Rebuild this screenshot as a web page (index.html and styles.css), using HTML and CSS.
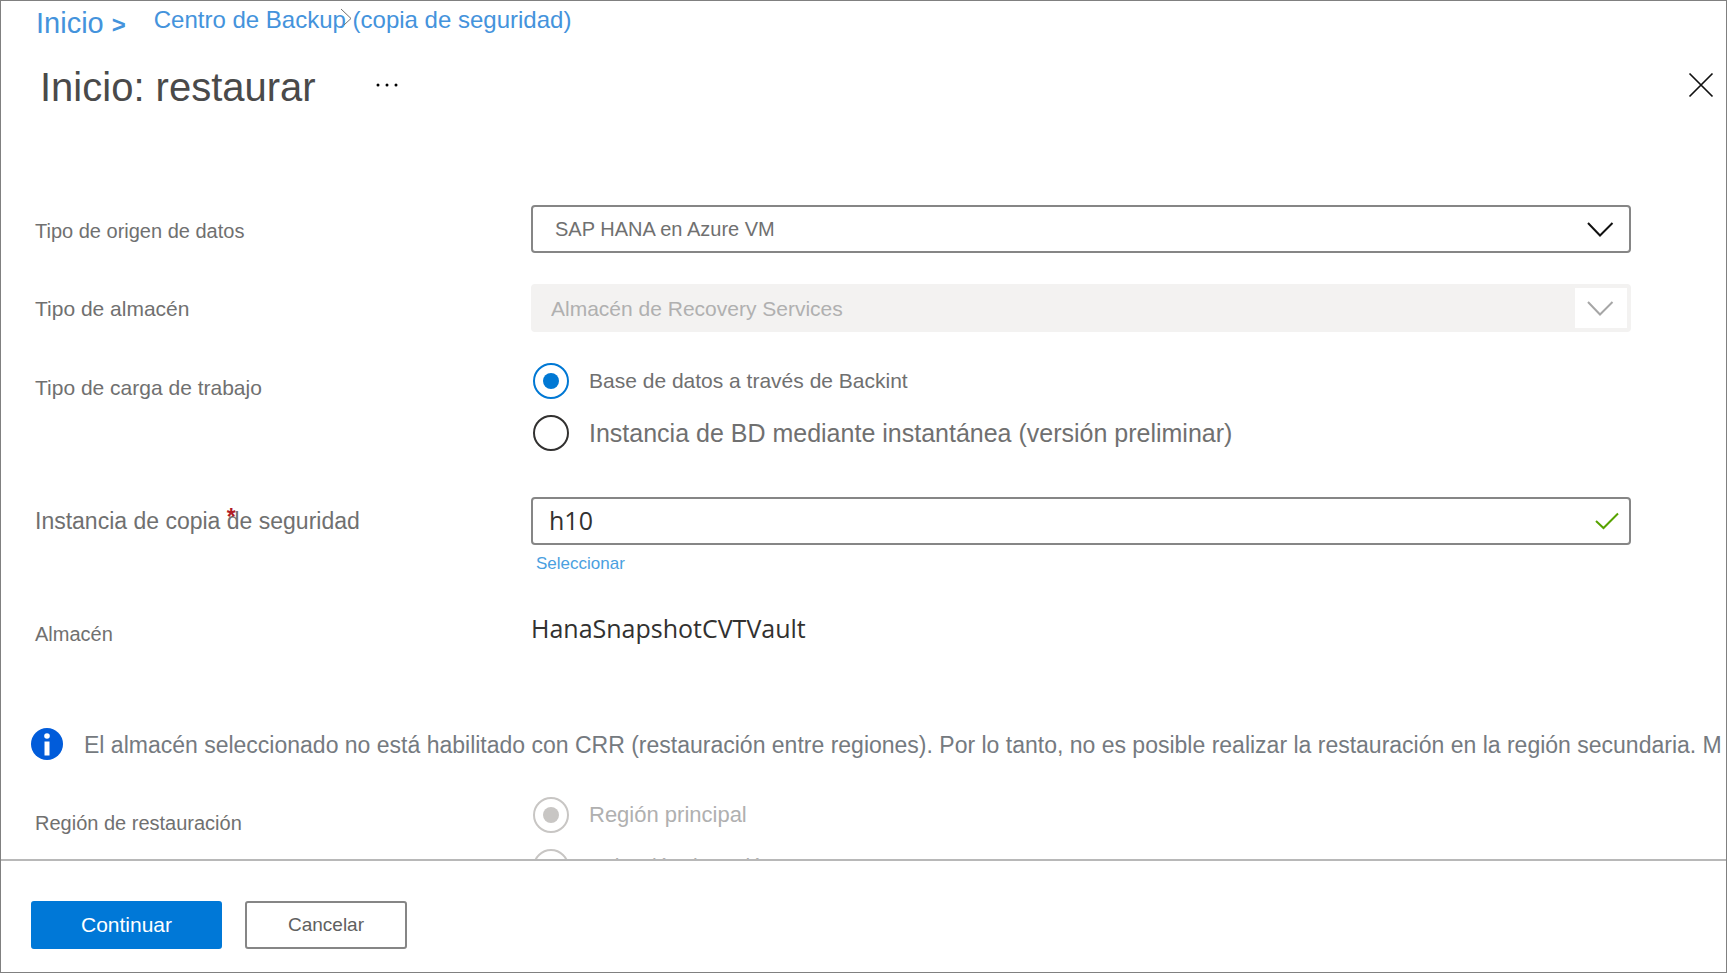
FILE: index.html
```html
<!DOCTYPE html>
<html lang="es">
<head>
<meta charset="utf-8">
<title>Inicio: restaurar</title>
<link rel="stylesheet" href="styles.css">
</head>
<body>
<div class="blade">
  <header class="blade-header">
    <nav class="breadcrumb" aria-label="Ruta">
      <a class="crumb crumb-home" href="#">Inicio <b>&gt;</b></a>
      <span class="crumb-wrap">
        <a class="crumb" href="#">Centro de Backup (copia de seguridad)</a>
        <svg class="crumb-chevron" width="12" height="18" viewBox="0 0 12 18" aria-hidden="true"><path d="M1 1L11 10.500L4 17"/></svg>
      </span>
    </nav>
    <div class="title-bar">
      <h1 class="title">Inicio: restaurar</h1>
      <button class="icon-button" type="button" aria-label="Más opciones">
        <svg width="24" height="6" viewBox="0 0 24 6"><circle cx="3" cy="3" r="1.500"/><circle cx="12" cy="3" r="1.500"/><circle cx="21" cy="3" r="1.500"/></svg>
      </button>
      <button class="icon-button close" type="button" aria-label="Cerrar">
        <svg width="26" height="26" viewBox="0 0 26 26"><path d="M1.500 1.500L24.500 24.500M24.500 1.500L1.500 24.500"/></svg>
      </button>
    </div>
  </header>

  <main class="content">
    <form class="form" id="restore-form">
      <div class="row">
        <label class="label" for="source">Tipo de origen de datos</label>
        <div class="control">
          <select class="field field-source" id="source"><option>SAP HANA en Azure VM</option></select>
          <span class="adorn"><svg width="28" height="16" viewBox="0 0 28 16"><path d="M1 2L13 14.500L25.500 2"/></svg></span>
        </div>
      </div>
      <div class="row">
        <label class="label label-md" for="vault-type">Tipo de almacén</label>
        <div class="control">
          <select class="field" id="vault-type" disabled><option>Almacén de Recovery Services</option></select>
          <span class="adorn adorn-disabled"><svg width="28" height="16" viewBox="0 0 28 16"><path d="M1 2L13 14.500L25.500 2"/></svg></span>
        </div>
      </div>
      <div class="row row-workload" role="radiogroup" aria-labelledby="workload">
        <span class="label label-md" id="workload">Tipo de carga de trabajo</span>
        <div class="options">
          <label class="option"><input class="radio" type="radio" name="workload" checked>Base de datos a través de Backint</label>
          <label class="option option-lg"><input class="radio" type="radio" name="workload">Instancia de BD mediante instantánea (versión preliminar)</label>
        </div>
      </div>
      <div class="row row-instance">
        <label class="label label-lg" for="instance">Instancia de copia <span class="required-anchor"><span class="required">*</span>de</span> seguridad</label>
        <div class="stack">
          <div class="control">
            <input class="field field-text" id="instance" type="text" value="h10">
            <span class="adorn adorn-check"><svg width="24" height="18" viewBox="0 0 24 18"><path d="M1 9L8.500 16L23 1.500"/></svg></span>
          </div>
          <a class="select-link" href="#">Seleccionar</a>
        </div>
      </div>
      <div class="row row-vault">
        <span class="label">Almacén</span>
        <output class="value">HanaSnapshotCVTVault</output>
      </div>
      <div class="notice">
        <svg class="notice-icon" width="32" height="32" viewBox="0 0 32 32" aria-hidden="true"><circle cx="16" cy="16" r="16"/><circle class="mark" cx="16" cy="8" r="2.800"/><path class="mark" d="M13.500 13.500h5v14h-5z"/></svg>
        <p class="notice-text">El almacén seleccionado no está habilitado con CRR (restauración entre regiones). Por lo tanto, no es posible realizar la restauración en la región secundaria. M</p>
      </div>
      <div class="row row-region" role="radiogroup" aria-labelledby="region">
        <span class="label" id="region">Región de restauración</span>
        <div class="options">
          <label class="option option-disabled"><input class="radio" type="radio" name="region" checked disabled>Región principal</label>
          <label class="option option-disabled option-sm"><input class="radio" type="radio" name="region" disabled>Selección de región</label>
        </div>
      </div>
    </form>
  </main>

  <footer class="actions">
    <button class="button button-primary" type="submit" form="restore-form">Continuar</button>
    <button class="button" type="button">Cancelar</button>
  </footer>
</div>
</body>
</html>
```
FILE: styles.css
```css
* { box-sizing: border-box; }

body {
  margin: 0;
  color: #707070;
  background: #fff;
  font-family: "Liberation Sans", Arial, sans-serif;
  font-size: 20px;
}

.blade {
  display: flex;
  flex-direction: column;
  height: 100vh;
  border: 1px solid #808080;
  overflow: hidden;
}

.blade-header { padding: 4px 12px 0 35px; }

.breadcrumb { display: flex; gap: 28px; }
.crumb { color: #4493dc; text-decoration: none; font-size: 24px; line-height: 30px; }
.crumb-home { font-size: 29px; line-height: 36px; }
.crumb-home b { font-size: 24px; }
.crumb-wrap { position: relative; }
.crumb-chevron { position: absolute; left: 186px; top: 3px; fill: none; stroke: #707070; }

.title-bar { display: flex; align-items: center; margin-top: 16px; padding-left: 4px; }
.title { margin: 0; padding-top: 4px; color: #4a4a4a; font-size: 40px; font-weight: 400; line-height: 48px; }
.icon-button { display: flex; margin-left: 59px; padding: 0; border: 0; background: none; }
.close { margin-left: auto; }
.close svg { fill: none; stroke: #111; stroke-width: 1.7; }

.content { flex: 1; min-height: 0; overflow: hidden; padding: 94px 0 0 30px; }

.form { display: flex; flex-direction: column; }
.row { display: grid; grid-template-columns: 496px minmax(0, 1fr); padding: 0 95px 0 4px; margin-bottom: 31px; }
.label { padding-top: 11px; font-size: 20px; line-height: 30px; }
.label-md { padding-top: 10px; font-size: 21px; }
.label-lg { padding-top: 9px; font-size: 23px; }

.control { position: relative; }
.field {
  display: block;
  width: 100%;
  height: 48px;
  padding: 0 64px 0 18px;
  border: 2px solid #868686;
  border-radius: 4px;
  appearance: none;
  background: #fff;
  color: #707070;
  font: 21px "Liberation Sans", Arial, sans-serif;
}
.field:disabled { border-color: #f3f2f1; background: #f3f2f1; color: #b0b0b0; opacity: 1; }
.field-source { padding: 0 64px 0 22px; font-size: 20px; }
.field-text { padding: 0 64px 2px 16px; color: #323130; font: 25px "Open Sans", sans-serif; }
.adorn { position: absolute; top: 4px; bottom: 4px; right: 4px; width: 52px; display: grid; place-items: center; pointer-events: none; }
.adorn svg { fill: none; stroke: #111; stroke-width: 2; }
.adorn-disabled { background: #fff; }
.adorn-disabled svg { stroke: #a6a6a6; }
.adorn-check { width: 40px; }
.adorn-check svg { stroke: #57a300; }

.options { display: grid; gap: 16px; padding-left: 2px; }
.option { display: flex; align-items: center; gap: 20px; height: 36px; font-size: 21px; }
.option-lg { font-size: 25px; }
.option-disabled { color: #b0b0b0; font-size: 22px; }
.option-sm { align-items: flex-start; font-size: 21px; line-height: 34px; }
.radio {
  appearance: none;
  width: 36px;
  height: 36px;
  margin: 0;
  border: 2px solid #323130;
  border-radius: 50%;
  display: grid;
  place-items: center;
}
.radio:checked { border-color: #0078d4; color: #0078d4; }
.radio:disabled { border-color: #c8c6c4; color: #c8c6c4; }
.radio:checked::before { content: ""; width: 16px; height: 16px; border-radius: 50%; background: currentColor; }

.row-workload { margin-bottom: 46px; }
.row-instance { margin-bottom: 32px; }
.required-anchor { position: relative; }
.required { position: absolute; left: 0; top: -6px; color: #b01c26; font-weight: 700; }
.select-link { display: block; width: max-content; padding: 7px 0 0 5px; color: #4aa0e0; font-size: 17px; line-height: 24px; text-decoration: none; }
.row-vault { margin-bottom: 77px; }
.value { padding-top: 2px; color: #323130; font: 25px/36px "Open Sans", sans-serif; }

.notice { display: flex; align-items: center; gap: 21px; margin-bottom: 35px; color: #757a80; }
.notice-icon { flex: none; fill: #015cda; }
.mark { fill: #fff; }
.notice-text { margin: 0; padding-top: 2px; font-size: 23px; line-height: 34px; white-space: nowrap; }

.actions { display: flex; gap: 23px; padding: 40px 30px 23px; border-top: 2px solid #b8b8b8; }
.button {
  width: 162px;
  height: 48px;
  border: 2px solid #868686;
  border-radius: 3px;
  background: #fff;
  color: #606060;
  font: 19px "Liberation Sans", Arial, sans-serif;
}
.button-primary { width: 191px; border-color: #0078d7; background: #0078d7; color: #fff; font-size: 21px; }
```
